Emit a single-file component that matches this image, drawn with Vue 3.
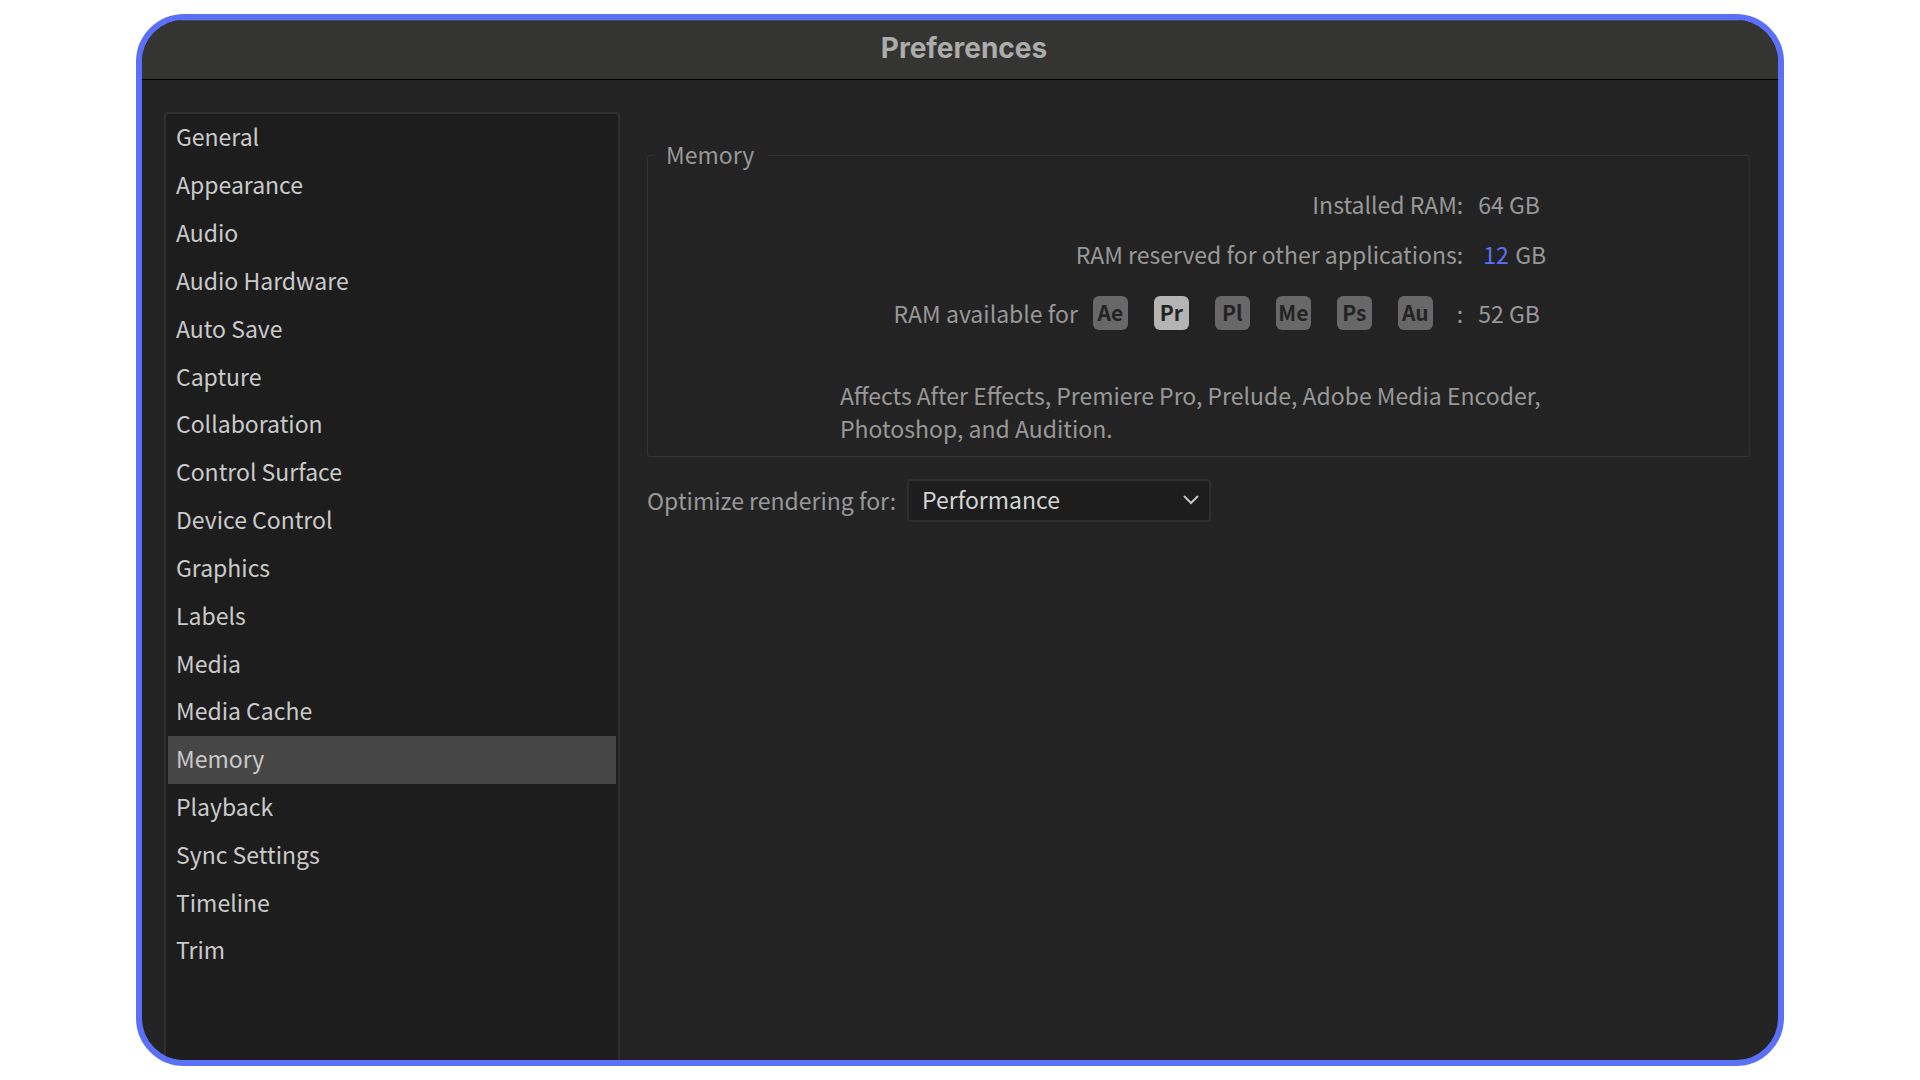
<!--
    preferences window, memory page
-->

<script setup>
    //------ imports ------
    import { ref } from 'vue';

    //------- data -------
    const categories = [
        'General',
        'Appearance',
        'Audio',
        'Audio Hardware',
        'Auto Save',
        'Capture',
        'Collaboration',
        'Control Surface',
        'Device Control',
        'Graphics',
        'Labels',
        'Media',
        'Media Cache',
        'Memory',
        'Playback',
        'Sync Settings',
        'Timeline',
        'Trim',
    ];
    const apps = ['Ae', 'Pr', 'Pl', 'Me', 'Ps', 'Au'];

    const selected = ref('Memory');
    const currentApp = ref('Pr');
    const reservedRam = ref('12');
    const optimizeFor = ref('Performance');
</script>


<template>
    <div class="page">
        <div class="window">
            <header class="titlebar">
                <h1>Preferences</h1>
            </header>

            <div class="content">
                <nav class="sidebar">
                    <button
                        v-for="category in categories"
                        :key="category"
                        type="button"
                        class="category"
                        :class="{ active: category === selected }"
                        @click="selected = category"
                    >{{ category }}</button>
                </nav>

                <main class="panel">
                    <fieldset class="group">
                        <legend>Memory</legend>

                        <div class="row">
                            <span class="name">Installed RAM:</span>
                            <span class="value">64 GB</span>
                        </div>

                        <div class="row">
                            <label class="name" for="reserved">RAM reserved for other applications:</label>
                            <span class="value editable">
                                <input id="reserved" v-model="reservedRam" type="text">
                                <span>GB</span>
                            </span>
                        </div>

                        <div class="row apps-row">
                            <span class="name">
                                <span>RAM available for</span>
                                <span class="apps">
                                    <span
                                        v-for="app in apps"
                                        :key="app"
                                        class="app"
                                        :class="{ current: app === currentApp }"
                                    >{{ app }}</span>
                                </span>
                                <span>:</span>
                            </span>
                            <span class="value">52 GB</span>
                        </div>

                        <p class="note">
                            Affects After Effects, Premiere Pro, Prelude, Adobe Media Encoder, Photoshop, and Audition.
                        </p>
                    </fieldset>

                    <div class="field">
                        <label for="optimize">Optimize rendering for:</label>
                        <div class="select">
                            <select id="optimize" v-model="optimizeFor">
                                <option>Performance</option>
                                <option>Memory</option>
                            </select>
                            <svg class="chevron" viewBox="0 0 16 10" width="16" height="10">
                                <path d="M1.5 1.5 L8 8 L14.5 1.5" fill="none" stroke="#c4c4c4" stroke-width="2" stroke-linecap="round" />
                            </svg>
                        </div>
                    </div>
                </main>
            </div>
        </div>
    </div>
</template>

<style>
    body {
        background-color: #fff;
    }
</style>

<style scoped>
    * {
        box-sizing: border-box;
    }
    .page {
        height: 100vh;
        padding: 14px 136px;
        font-family: "Noto Sans CJK SC", "Noto Sans", sans-serif;
        font-size: 23px;
        line-height: 34px;
        color: #989898;
    }
    .window {
        display: flex;
        flex-direction: column;
        height: 100%;
        overflow: hidden;
        border: 6px solid #5b70f6;
        border-radius: 48px;
        background-color: #232323;
    }
    .titlebar {
        height: 60px;
        padding-top: 10px;
        border-top: 1px solid #4a4a48;
        border-bottom: 1px solid #000;
        background-color: #343432;
    }
    h1 {
        margin: 0;
        padding-left: 8px;
        font-family: Inter, sans-serif;
        font-size: 28px;
        font-weight: 700;
        line-height: 34px;
        text-align: center;
        color: #acacaa;
    }
    .content {
        display: flex;
        flex: 1;
        gap: 27px;
        padding: 32px 28px 0 22px;
    }
    .sidebar {
        display: flex;
        flex-direction: column;
        flex: 0 0 456px;
        padding: 0 2px 85px;
        border: 2px solid #2e2e2e;
        border-bottom: none;
        border-radius: 4px 4px 0 0;
        background-color: #1d1d1d;
    }
    .category {
        flex: 1;
        padding: 0 8px 3px;
        border: none;
        background: none;
        font: inherit;
        text-align: left;
        color: #cacaca;
        cursor: pointer;
    }
    .category.active {
        background-color: #464646;
    }
    .panel {
        flex: 1;
        padding-top: 25px;
    }
    .group {
        margin: 0;
        padding: 14px 0 11px 2px;
        border: 1px solid #343434;
        border-radius: 3px;
    }
    legend {
        margin-left: 4px;
        padding: 0 14px 2px 12px;
    }
    .row {
        display: grid;
        grid-template-columns: 74% 1fr;
        column-gap: 15px;
        margin-bottom: 16px;
    }
    .name {
        text-align: right;
    }
    .editable {
        display: flex;
        gap: 6px;
        padding-left: 5px;
    }
    .editable input {
        width: 26px;
        height: 34px;
        padding: 0;
        border: none;
        background: none;
        font: inherit;
        color: #5b70f6;
    }
    .apps-row {
        margin: 25px 0 49px;
    }
    .apps-row .name {
        display: flex;
        justify-content: flex-end;
        gap: 15px;
    }
    .apps {
        display: flex;
        gap: 26px;
        padding-right: 9px;
    }
    .app {
        width: 35px;
        height: 34px;
        border-radius: 6px;
        background-color: #686868;
        font-size: 21px;
        font-weight: 700;
        line-height: 32px;
        text-align: center;
        color: #232323;
    }
    .app.current {
        background-color: #b4b4b4;
    }
    .note {
        max-width: 720px;
        margin: 0 0 0 190px;
        line-height: 33px;
    }
    .field {
        display: flex;
        align-items: center;
        gap: 11px;
        margin-top: 22px;
    }
    .field label {
        padding-bottom: 2px;
    }
    .select {
        position: relative;
        width: 304px;
    }
    select {
        width: 100%;
        height: 43px;
        padding: 0 13px 3px;
        appearance: none;
        border: 2px solid #2e2e2e;
        border-radius: 4px;
        background-color: #1d1d1d;
        font: inherit;
        color: #d4d4d4;
    }
    .chevron {
        position: absolute;
        top: 16px;
        right: 12px;
        pointer-events: none;
    }
</style>
